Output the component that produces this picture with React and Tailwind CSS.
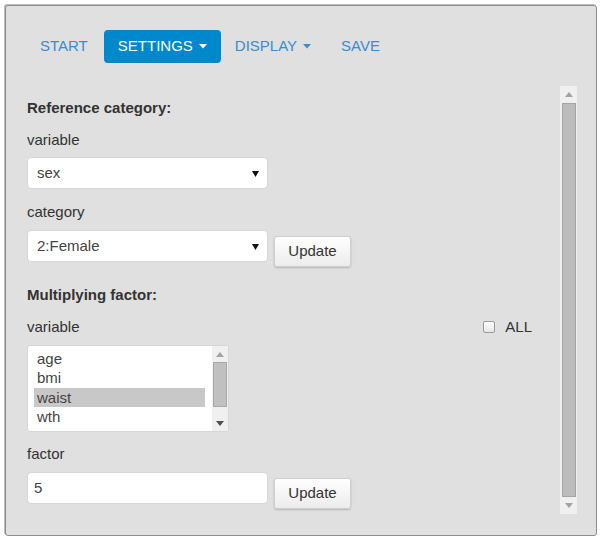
import React from 'react';

const font = { fontFamily: '"Liberation Sans", Arial, sans-serif' };

const Caret = ({ className = '' }) => (
  <svg width="8" height="5" viewBox="0 0 8 5" className={className}>
    <path d="M0 0 L8 0 L4 4.5 Z" fill="currentColor" />
  </svg>
);

const SelectBox = ({ value }) => (
  <div className="w-[241px] h-[32px] bg-white border border-[#d6d6d6] rounded-[4px] flex items-center justify-between pl-[9px] pr-[8px] text-[15px] text-[#444]">
    <span>{value}</span>
    <svg width="7" height="7" viewBox="0 0 7 7">
      <path d="M0 1 L7 1 L3.5 7 Z" fill="#111" />
    </svg>
  </div>
);

const UpdateButton = () => (
  <button className="ml-[6px] mt-[6px] w-[77px] h-[31px] rounded-[3px] border border-[#cfcfcf] bg-gradient-to-b from-white to-[#ececec] shadow-[0_1px_2px_rgba(0,0,0,0.2)] text-[15px] text-[#333]">
    Update
  </button>
);

const Label = ({ children, bold }) => (
  <div className={`h-[20px] leading-[20px] text-[15px] text-[#333] ${bold ? 'font-bold' : ''}`}>{children}</div>
);

const App = () => {
  const items = ['age', 'bmi', 'waist', 'wth', 'whr'];
  return (
    <div className="w-[602px] h-[541px] bg-white pt-[5px] pl-[5px]" style={font}>
      <div className="w-[592px] h-[531px] bg-[#e0e0e0] border border-[#8c8c8c] rounded-[3px] shadow-[-1px_-1px_0_#bdbdbd] flex flex-col">
        {/* Nav */}
        <div className="flex items-center gap-[1px] mt-[24px] pl-[20px] text-[15px]">
          <div className="h-[33px] pl-[14px] pr-[15px] flex items-center text-[#3a8bd0]">START</div>
          <div className="h-[33px] px-[14px] flex items-center gap-[6px] bg-[#0088cc] text-white rounded-[4px]">
            SETTINGS <Caret />
          </div>
          <div className="h-[33px] pl-[13px] pr-[15px] flex items-center gap-[6px] text-[#3a8bd0]">
            DISPLAY <Caret />
          </div>
          <div className="h-[33px] px-[14px] flex items-center text-[#3a8bd0]">SAVE</div>
        </div>

        {/* Body */}
        <div className="flex mt-[23px] h-[428px]">
          <div className="flex-1 pl-[21px] pt-[12px] pr-[28px]">
            <Label bold>Reference category:</Label>
            <div className="mt-[12px]"><Label>variable</Label></div>
            <div className="mt-[7px]"><SelectBox value="sex" /></div>
            <div className="mt-[13px]"><Label>category</Label></div>
            <div className="mt-[8px] flex items-start">
              <SelectBox value="2:Female" />
              <UpdateButton />
            </div>

            <div className="mt-[18px]"><Label bold>Multiplying factor:</Label></div>
            <div className="mt-[12px] h-[20px] flex justify-between items-center">
              <Label>variable</Label>
              <div className="flex items-center gap-[10px] h-[20px] leading-[20px] text-[15px] text-[#333]">
                <div className="w-[12px] h-[12px] rounded-[2px] border border-[#9a9a9a] bg-gradient-to-b from-[#fdfdfd] to-[#e6e6e6]" />
                <span>ALL</span>
              </div>
            </div>
            <div className="mt-[8px] w-[202px] h-[87px] bg-white border border-[#d6d6d6] rounded-[3px] flex overflow-hidden">
              <div className="flex-1 pt-[3px] pl-[6px] pr-[7px] overflow-hidden">
                {items.map((it) => (
                  <div
                    key={it}
                    className={`h-[19.4px] leading-[19.4px] pl-[3px] text-[15px] text-[#444] ${it === 'waist' ? 'bg-[#c8c8c8]' : ''}`}
                  >
                    {it}
                  </div>
                ))}
              </div>
              <div className="w-[16px] bg-[#f0f0f0] flex flex-col items-center">
                <svg width="8" height="5" viewBox="0 0 8 5" className="mt-[6px]">
                  <path d="M0 5 L8 5 L4 0 Z" fill="#a3a3a3" />
                </svg>
                <div className="mt-[5px] w-[14px] h-[45px] bg-[#c0c0c0] border border-[#a8a8a8]" />
                <svg width="8" height="5" viewBox="0 0 8 5" className="mt-[14px]">
                  <path d="M0 0 L8 0 L4 5 Z" fill="#505050" />
                </svg>
              </div>
            </div>
            <div className="mt-[12px]"><Label>factor</Label></div>
            <div className="mt-[8px] flex items-start">
              <div className="w-[241px] h-[32px] bg-white border border-[#d6d6d6] rounded-[4px] flex items-center pl-[6px] text-[15px] text-[#444]">5</div>
              <UpdateButton />
            </div>
          </div>

          {/* Scrollbar */}
          <div className="w-[17px] mr-[19px] bg-[#f0f0f0] flex flex-col items-center">
            <svg width="8" height="5" viewBox="0 0 8 5" className="mt-[6px]">
              <path d="M0 5 L8 5 L4 0 Z" fill="#a3a3a3" />
            </svg>
            <div className="mt-[6px] w-[14px] flex-1 bg-[#bcbcbc] border border-[#a4a4a4]" />
            <svg width="8" height="5" viewBox="0 0 8 5" className="mt-[6px] mb-[6px]">
              <path d="M0 0 L8 0 L4 5 Z" fill="#a3a3a3" />
            </svg>
          </div>
        </div>
      </div>
    </div>
  );
};

export default App;
